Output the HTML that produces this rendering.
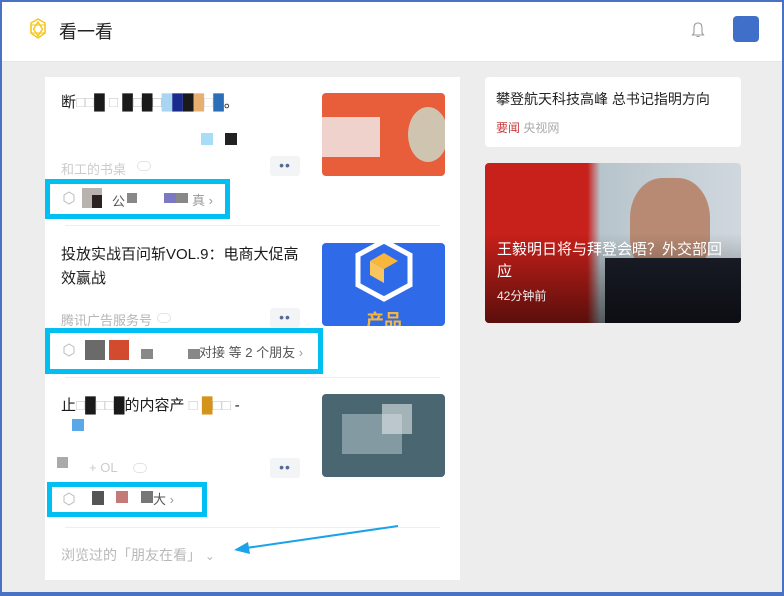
<!DOCTYPE html>
<html><head><meta charset="utf-8"><style>
*{margin:0;padding:0;box-sizing:border-box}
body{width:784px;height:596px;overflow:hidden;background:#ededed;font-family:"Liberation Sans","Noto Sans CJK SC",sans-serif;position:relative}
.frame{position:absolute;left:0;top:0;width:784px;height:596px;border:2px solid #4a72c4;border-bottom-width:4px;pointer-events:none;z-index:10}
.hdr{position:absolute;left:0;top:0;width:784px;height:62px;background:#fff;border-bottom:1px solid #e6e6e6}
.abs{position:absolute}
.card{position:absolute;left:45px;top:77px;width:415px;height:503px;background:#fff}
.t{font-size:15px;color:#1a1a1a;line-height:24px}
.g{color:#b5b5b5;font-size:13px}
.dots{position:absolute;width:30px;height:20px;background:#f3f4f6;border-radius:3px;text-align:center;font-size:14px;color:#566a94;line-height:19px;letter-spacing:1px}
.hl{position:absolute;border:5px solid #00bff3}
.sep{position:absolute;left:20px;width:375px;height:1px;background:#eee}
.img{position:absolute;left:277px;width:123px;height:83px;border-radius:4px;overflow:hidden}
.sq{position:absolute}
.fr{font-size:13px;color:#555}
</style></head><body>
<div class="hdr">
 <svg class="abs" style="left:28px;top:18px" width="20" height="22" viewBox="0 0 20 22"><g fill="none" stroke="#f5c518" stroke-width="1.4"><polygon points="10,1 17,5 17,15 10,20 3,15 3,5"/><polygon points="10,4 14.5,11 10,18 5.5,11"/><polygon points="3,7 17,7 17,15 3,15" opacity=".7"/></g></svg>
 <div class="abs" style="left:59px;top:18px;font-size:18px;color:#222">看一看</div>
 <svg class="abs" style="left:690px;top:21px" width="16" height="18" viewBox="0 0 16 18"><path d="M8 2c-3 0-4 2-4 5v5l-1.5 2h11L12 12V7c0-3-1-5-4-5zM6.5 15.5h3" fill="none" stroke="#999" stroke-width="1.1"/></svg>
 <div class="abs" style="left:733px;top:16px;width:26px;height:26px;background:#3f6fc8;border-radius:4px"></div>
</div>

<div class="card">
 <div class="abs t" style="left:16px;top:14px">断<span style="color:#ccc">□□</span>█<span style="color:#ccc"> □ </span>█<span style="color:#bbb">□</span>█<span style="color:#bbb">□</span><span style="color:#a8d6f2">█</span><span style="color:#1a2a8e">█</span>█<span style="color:#e8b070">█</span><span style="color:#ddd">□</span><span style="color:#2a6fb8">█</span>。</div>
 <div class="sq" style="left:156px;top:56px;width:12px;height:12px;background:#a8dcf7"></div>
 <div class="sq" style="left:180px;top:56px;width:12px;height:12px;background:#222"></div>
 <div class="abs g" style="left:16px;top:82px;color:#ccc">和工的书桌</div>
 <div class="abs" style="left:92px;top:84px;width:14px;height:10px;border:1px solid #e3e3e3;border-radius:5px"></div>
 <div class="dots" style="left:225px;top:79px">••</div>
 <div class="img" style="top:16px;background:#e85d3a"><div class="sq" style="left:-2px;top:24px;width:60px;height:40px;background:#f0f0f0;opacity:.8"></div><div class="sq" style="left:86px;top:14px;width:40px;height:55px;border-radius:50%;background:#cfc4b0"></div></div>
 <div class="hl" style="left:0px;top:102px;width:185px;height:40px"></div>
 <svg class="abs" style="left:17px;top:114px" width="14" height="14" viewBox="0 0 14 14"><polygon points="7,1 12,4 12,10 7,13 2,10 2,4" fill="none" stroke="#bbb"/></svg>
 <div class="sq" style="left:37px;top:111px;width:20px;height:20px;background:#b9b3b0"></div>
 <div class="sq" style="left:47px;top:118px;width:10px;height:13px;background:#2a2222"></div>
 <div class="abs fr" style="left:67px;top:114px">公</div>
 <div class="sq" style="left:82px;top:116px;width:10px;height:10px;background:#888"></div>
 <div class="sq" style="left:119px;top:116px;width:12px;height:10px;background:#7b78c6"></div>
 <div class="sq" style="left:131px;top:116px;width:12px;height:10px;background:#888"></div>
 <div class="abs fr" style="left:147px;top:113px;color:#999">真 ›</div>
 <div class="sep" style="top:148px"></div>

 <div class="abs t" style="left:16px;top:166px;width:250px">投放实战百问斩VOL.9：电商大促高效赢战</div>
 <div class="abs g" style="left:16px;top:233px">腾讯广告服务号</div>
 <div class="abs" style="left:112px;top:236px;width:14px;height:10px;border:1px solid #e3e3e3;border-radius:5px"></div>
 <div class="dots" style="left:225px;top:231px">••</div>
 <div class="img" style="top:166px;background:#2f6be8">
  <svg class="abs" style="left:30px;top:-4px" width="64" height="64" viewBox="0 0 64 64"><polygon points="32,2 58,16 58,46 32,60 6,46 6,16" fill="none" stroke="#fff" stroke-width="5"/><polygon points="32,14 46,22 32,30 18,22" fill="#f8b63c"/><polygon points="18,22 32,30 32,44 18,36" fill="#f9c65d"/></svg>
  <div class="abs" style="left:44px;top:64px;color:#f8b63c;font-size:18px;font-weight:bold">产品</div>
 </div>
 <div class="hl" style="left:0px;top:251px;width:278px;height:46px"></div>
 <svg class="abs" style="left:17px;top:266px" width="14" height="14" viewBox="0 0 14 14"><polygon points="7,1 12,4 12,10 7,13 2,10 2,4" fill="none" stroke="#bbb"/></svg>
 <div class="sq" style="left:40px;top:263px;width:20px;height:20px;background:#6a6a6a"></div>
 <div class="sq" style="left:64px;top:263px;width:20px;height:20px;background:#d34b2e"></div>
 <div class="sq" style="left:96px;top:272px;width:12px;height:10px;background:#888"></div>
 <div class="sq" style="left:143px;top:272px;width:12px;height:10px;background:#888"></div>
 <div class="abs fr" style="left:154px;top:265px">对接 等 2 个朋友 <span style="color:#999">›</span></div>
 <div class="sep" style="top:300px"></div>

 <div class="abs t" style="left:16px;top:317px">止<span style="color:#ccc">□</span>█<span style="color:#ccc">□□</span>█的内容产 <span style="color:#ccc">□</span> <span style="color:#d4941a">█</span><span style="color:#ccc">□□</span> -</div>
 <div class="sq" style="left:27px;top:342px;width:12px;height:12px;background:#5aa8e8"></div>
 <div class="sq" style="left:12px;top:380px;width:11px;height:11px;background:#aaa"></div>
 <div class="abs g" style="left:44px;top:383px;color:#ccc">+ OL</div>
 <div class="abs" style="left:88px;top:386px;width:14px;height:10px;border:1px solid #e3e3e3;border-radius:5px"></div>
 <div class="dots" style="left:225px;top:381px">••</div>
 <div class="img" style="top:317px;background:#4a6670"><div class="sq" style="left:20px;top:20px;width:60px;height:40px;background:#9cb0b8;opacity:.7"></div><div class="sq" style="left:60px;top:10px;width:30px;height:30px;background:#dfe6e8;opacity:.6"></div></div>
 <div class="hl" style="left:2px;top:405px;width:160px;height:35px"></div>
 <svg class="abs" style="left:17px;top:415px" width="14" height="14" viewBox="0 0 14 14"><polygon points="7,1 12,4 12,10 7,13 2,10 2,4" fill="none" stroke="#bbb"/></svg>
 <div class="sq" style="left:47px;top:414px;width:12px;height:14px;background:#555"></div>
 <div class="sq" style="left:71px;top:414px;width:12px;height:12px;background:#c47b77"></div>
 <div class="sq" style="left:96px;top:414px;width:12px;height:12px;background:#777"></div>
 <div class="abs fr" style="left:108px;top:412px">大<span style="color:#999">  ›</span></div>
 <div class="sep" style="top:450px"></div>
 <div class="abs" style="left:16px;top:468px;font-size:14px;color:#b8b8b8">浏览过的「朋友在看」 <span style="font-size:12px">⌄</span></div>
</div>
<svg class="abs" style="left:230px;top:520px" width="175" height="35" viewBox="0 0 175 35"><line x1="168" y1="6" x2="16" y2="28" stroke="#1aa3e8" stroke-width="2"/><polygon points="4,30 18,22 20,34" fill="#1aa3e8"/></svg>

<div class="abs" style="left:485px;top:77px;width:256px;height:70px;background:#fff;border-radius:4px">
 <div class="abs" style="left:11px;top:12px;font-size:14px;color:#222">攀登航天科技高峰 总书记指明方向</div>
 <div class="abs" style="left:11px;top:42px;font-size:12px;color:#c94040">要闻 <span style="color:#aaa">央视网</span></div>
</div>
<div class="abs" style="left:485px;top:163px;width:256px;height:160px;border-radius:4px;overflow:hidden;background:linear-gradient(90deg,#c8201a 0,#c8201a 40%,#b8c4cc 45%,#d0d8de 100%)">
 <div class="abs" style="left:145px;top:15px;width:80px;height:100px;border-radius:40%;background:#b88a74"></div>
 <div class="abs" style="left:120px;top:95px;width:140px;height:70px;background:#1c1f2a"></div>
 <div class="abs" style="left:0;top:70px;width:256px;height:90px;background:linear-gradient(rgba(0,0,0,0),rgba(0,0,0,.55))"></div>
 <div class="abs" style="left:12px;top:76px;width:235px;font-size:15px;line-height:22px;color:#fff">王毅明日将与拜登会晤？外交部回应</div>
 <div class="abs" style="left:12px;top:124px;font-size:12px;color:#eee">42分钟前</div>
</div>
<div class="frame"></div>
</body></html>
